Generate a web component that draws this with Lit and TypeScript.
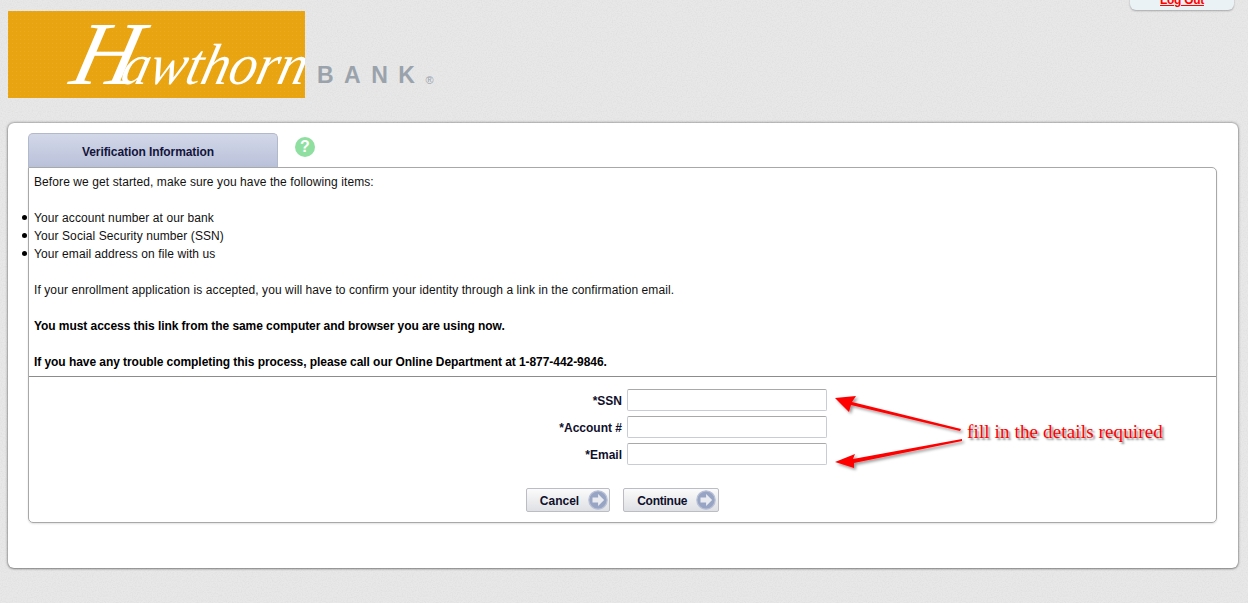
import { LitElement, html, css, svg } from "lit";
import { customElement } from "lit/decorators.js";

const arrowBtn = svg`<svg class="go" width="20" height="20" viewBox="0 0 20 20"><circle cx="10" cy="10" r="9.2" fill="#98a4c4" stroke="#b9c1d6" stroke-width="1.2"/><path d="M4.5 7.6h5.6V4l6 6-6 6v-3.6H4.5z" fill="#e9ebf0"/></svg>`;

@customElement("app-root")
export class AppRoot extends LitElement {
  static styles = css`
    :host { display: block; position: relative; width: 1248px; height: 603px; overflow: hidden; box-sizing: border-box; padding: 11px 10px 0 8px;
      font-family: "Liberation Sans", Arial, sans-serif; font-size: 12px; color: #000;
      background-color: #e8e8e8;
    }
    .grain { position: absolute; inset: 0; pointer-events: none; }
    .logout { position: absolute; top: -10px; left: 1130px; width: 104px; height: 20px; box-sizing: border-box; background: #eaf2f5; border-radius: 0 0 6px 6px; box-shadow: 0 1px 2px rgba(0,0,0,.28); text-align: center; line-height: 14px; padding-top: 3px; }
    .logout a { color: #f00; font-weight: 700; font-size: 12px; letter-spacing: -.3px; text-decoration: underline; }
    .header { position: relative; display: flex; align-items: flex-end; height: 87px; }
    .logo { width: 297px; height: 87px; background: #e8a411; overflow: hidden; display: block; flex: none; }
    .wordmark { font-size: 23px; font-weight: 700; color: #9aa3ac; letter-spacing: 10.5px; margin: 0 0 11px 12px; line-height: 24px; white-space: nowrap; display: flex; align-items: flex-end; }
    .reg { font-size: 11px; font-weight: 400; letter-spacing: 0; line-height: 14px; }
    .card { position: relative; margin-top: 25px; height: 445px; width: 1230px; box-sizing: border-box; background: #fff; border-radius: 6px; box-shadow: 0 0 3px rgba(0,0,0,.55), 0 1px 2px rgba(0,0,0,.25); padding: 10px 21px 0 20px; }
    .tabs { display: flex; height: 34px; }
    .tab { width: 250px; height: 34px; box-sizing: border-box; border: 1px solid #b3b9cc; border-bottom: 0; border-radius: 5px 5px 0 0; background: linear-gradient(#d3d8e8, #b9c1da); color: #14143c; font-weight: 700; letter-spacing: -.08px; text-align: center; line-height: 36px; padding-right: 10px; }
    .help { margin: 4px 0 0 17px; width: 20px; height: 20px; border-radius: 50%; background: #8fdfa0; color: #fff; font-weight: 700; font-size: 16px; line-height: 20px; text-align: center; }
    .box { width: 1189px; height: 356px; box-sizing: border-box; border: 1px solid #a8a8a8; border-radius: 0 5px 5px 5px; box-shadow: 0 1px 2px rgba(0,0,0,.12); }
    .info { height: 209px; box-sizing: border-box; padding: 5px 5px 0; border-bottom: 1px solid #8c8c8c; line-height: 18px; color: #111; letter-spacing: .09px; }
    .info p { margin: 0 0 18px; }
    .info ul { margin: 0 0 18px; padding: 0; list-style: none; }
    .info li { position: relative; }
    .info li::before { content: ""; position: absolute; left: -12px; top: 6px; width: 5px; height: 5px; border-radius: 50%; background: #000; }
    .info b { color: #000; letter-spacing: -.06px; }
    .form { display: grid; grid-template-columns: 593px 200px; column-gap: 5px; row-gap: 5px; padding-top: 12px; align-items: center; }
    .form label { text-align: right; font-weight: 700; color: #10102c; line-height: 22px; padding-top: 1px; height: 21px; }
    .form input { width: 200px; height: 22px; box-sizing: border-box; border: 1px solid #c9ccd2; border-top-color: #a9a9a9; border-radius: 2px; background: #fff; margin: 0; padding: 0 3px; }
    .buttons { display: flex; justify-content: center; gap: 13px; margin-top: 23px; }
    .btn { display: flex; align-items: center; gap: 9px; height: 24px; box-sizing: border-box; border: 1px solid #bcbcc4; border-radius: 2px; background: linear-gradient(#fbfbfb, #dfe0e4); padding: 0 2px 0 13px; font: 700 12px "Liberation Sans", Arial, sans-serif; color: #10102c; }
    .btn span { padding-top: 1px; }
    .cancel { padding-right: 1px; }
    .tight { letter-spacing: -.25px; }
    .go { display: block; }
    .overlay { position: absolute; left: 820px; top: 380px; }
    .note { position: absolute; left: 967px; top: 421px; font: 19px/22px "Liberation Serif", "Times New Roman", serif; letter-spacing: .14px; color: #f00; text-shadow: 2px 2px 2px rgba(0,0,0,.45); white-space: nowrap; }
  `;

  render() {
    return html`
      <svg class="grain" width="1248" height="603" aria-hidden="true">
        <filter id="n"><feTurbulence type="fractalNoise" baseFrequency=".8" numOctaves="2"/><feColorMatrix values="0 0 0 0 .45 0 0 0 0 .45 0 0 0 0 .45 1.2 0 0 0 -.45"/></filter>
        <rect width="1248" height="603" filter="url(#n)" opacity=".25"/>
      </svg>
      <div class="logout"><a href="#">Log Out</a></div>
      <div class="header">
        <svg class="logo" viewBox="0 0 297 87" width="297" height="87">
          <defs><pattern id="dots" width="4" height="4" patternUnits="userSpaceOnUse"><rect width="1" height="1" fill="#edaa1c"/></pattern></defs>
          <rect width="297" height="87" fill="url(#dots)"/>
          <text transform="skewX(-14)" x="78" y="73" font-family="Liberation Serif" font-style="italic" fill="#fff"><tspan font-size="90">H</tspan><tspan font-size="58" dx="-14" textLength="184" lengthAdjust="spacingAndGlyphs">awthorn</tspan></text>
        </svg>
        <div class="wordmark">BANK<span class="reg">®</span></div>
      </div>
      <div class="card">
        <div class="tabs">
          <div class="tab">Verification Information</div>
          <div class="help">?</div>
        </div>
        <div class="box">
          <div class="info">
            <p>Before we get started, make sure you have the following items:</p>
            <ul>
              <li>Your account number at our bank</li>
              <li>Your Social Security number (SSN)</li>
              <li>Your email address on file with us</li>
            </ul>
            <p>If your enrollment application is accepted, you will have to confirm your identity through a link in the confirmation email.</p>
            <p><b>You must access this link from the same computer and browser you are using now.</b></p>
            <p><b>If you have any trouble completing this process, please call our Online Department at 1-877-442-9846.</b></p>
          </div>
          <div class="form">
            <label>*SSN</label><input type="text" />
            <label>*Account #</label><input type="text" />
            <label>*Email</label><input type="text" />
          </div>
          <div class="buttons">
            <button class="btn cancel"><span>Cancel</span>${arrowBtn}</button>
            <button class="btn tight"><span>Continue</span>${arrowBtn}</button>
          </div>
        </div>
      </div>
      <svg class="overlay" width="160" height="100" viewBox="0 0 160 100">
        <defs><filter id="s" x="-10%" y="-30%" width="130%" height="170%"><feDropShadow dx="2" dy="2" stdDeviation="1.5" flood-color="#000" flood-opacity=".4"/></filter></defs>
        <g filter="url(#s)" fill="#f00">
          <path d="M15 18 L36 16 L32 22 L141 49 L140 51 L31 25 L29 32 Z"/>
          <path d="M15 82 L35 74 L33 79 L142 59 L142 61 L34 83 L34 88 Z"/>
        </g>
      </svg>
      <div class="note">fill in the details required</div>
    `;
  }
}
